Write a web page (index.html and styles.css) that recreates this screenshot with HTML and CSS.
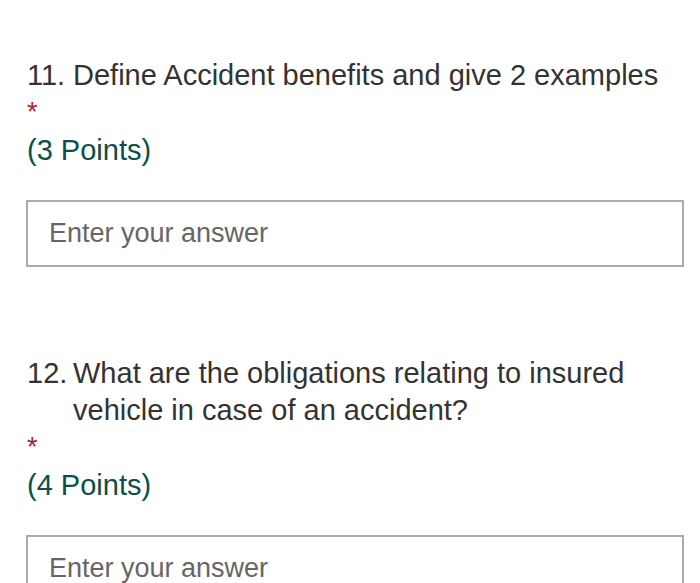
FILE: index.html
```html
<!DOCTYPE html>
<html lang="en">
<head>
<meta charset="utf-8">
<title>Form</title>
<link rel="stylesheet" href="styles.css">
</head>
<body>
<main class="form">
  <section class="question q11">
    <div class="title"><span class="num">11.</span><span class="text">Define Accident benefits and give 2 examples</span></div>
    <div class="required">*</div>
    <div class="points">(3 Points)</div>
    <div class="answer">Enter your answer</div>
  </section>
  <section class="question q12">
    <div class="title"><span class="num">12.</span><span class="text">What are the obligations relating to insured vehicle in case of an accident?</span></div>
    <div class="required">*</div>
    <div class="points">(4 Points)</div>
    <div class="answer">Enter your answer</div>
  </section>
</main>
</body>
</html>
```
FILE: styles.css
```css
html, body {
  margin: 0;
  padding: 0;
  background: #ffffff;
  overflow: hidden;
}
.form {
  font-family: "Liberation Sans", Arial, sans-serif;
  padding: 57px 16px 0 26px;
}
.question {
  display: flex;
  flex-direction: column;
}
.q12 {
  margin-top: 88px;
}
.title {
  display: flex;
  font-size: 29px;
  line-height: 37px;
  color: #333333;
  padding-left: 1px;
}
.num {
  flex: none;
  width: 46px;
}
.text {
  flex: 1;
}
.required {
  font-size: 27px;
  line-height: 36px;
  color: #a4262c;
  padding-left: 1px;
}
.points {
  font-size: 29px;
  line-height: 36px;
  color: #0d4f48;
  margin-top: 2px;
  padding-left: 1px;
}
.answer {
  margin-top: 32px;
  height: 63px;
  border: 2px solid #ababab;
  box-sizing: content-box;
  padding-left: 21px;
  font-size: 27px;
  line-height: 63px;
  color: #666666;
}
```
